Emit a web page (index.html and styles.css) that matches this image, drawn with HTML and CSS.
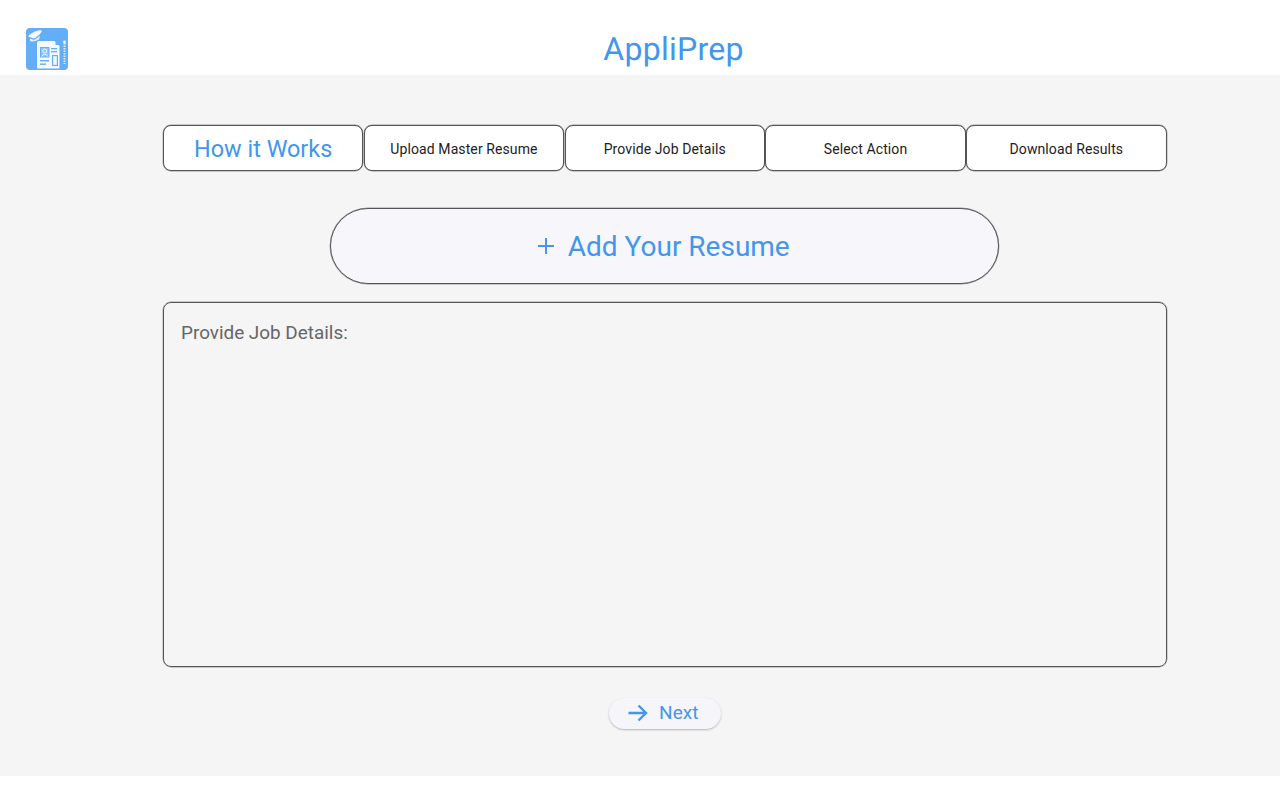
FILE: index.html
```html
<!DOCTYPE html>
<html lang="en">
<head>
    <meta charset="UTF-8" />
    <title>AppliPrep</title>
    <link rel="stylesheet" href="styles.css">
</head>
<body>
    <header class="top-bar">
        <svg class="logo" viewBox="0 0 42 42" aria-label="AppliPrep logo">
            <rect width="42" height="42" rx="4" fill="#64adf8" />
            <path d="M2 8.5 Q5 4 14 2 L16 3 Q14 7 8 10.5 Z" fill="#f4f9ff" />
            <path d="M4 10.5 L8 12 L14 8 L13 11.5 Q8 14.5 4 13 Z" fill="#e4f0fd" />
            <path d="M11 15 Q11 13 13 13 H28.5 L33.5 18 V40.5 H11 Z" fill="#f4f9ff" />
            <path d="M29.5 13 L33.5 17 H29.5 Z" fill="#64adf8" />
            <rect x="14" y="19" width="9.5" height="10.5" fill="#64adf8" />
            <rect x="15" y="20" width="7.5" height="8.5" fill="#8fc4fa" />
            <circle cx="18.7" cy="23" r="2" fill="none" stroke="#f4f9ff" />
            <path d="M15.5 28.5 Q18.7 24 22 28.5" fill="none" stroke="#f4f9ff" />
            <rect x="25" y="20" width="6" height="1.3" fill="#64adf8" />
            <rect x="25" y="23" width="6" height="1.3" fill="#64adf8" />
            <rect x="14" y="32" width="9" height="1.4" fill="#64adf8" />
            <rect x="14" y="35.5" width="6" height="1.4" fill="#64adf8" />
            <rect x="26" y="27" width="6" height="11" fill="#64adf8" />
            <rect x="27.2" y="28.2" width="3.6" height="8.6" fill="#f4f9ff" />
            <path d="M38.5 15 V36" stroke="#dcecfd" stroke-width="2" stroke-dasharray="1.5 1" />
            <circle cx="38.5" cy="14" r="1.4" fill="#f4f9ff" />
        </svg>
        <h1 class="app-title">AppliPrep</h1>
    </header>

    <main class="content">
        <nav class="steps">
            <button class="step step-active">How it Works</button>
            <button class="step">Upload Master Resume</button>
            <button class="step">Provide Job Details</button>
            <button class="step">Select Action</button>
            <button class="step">Download Results</button>
        </nav>

        <button class="add-resume">
            <svg class="plus-icon" viewBox="0 0 18 18">
                <path d="M9 1 V17 M1 9 H17" stroke="#4296ee" stroke-width="2" fill="none" />
            </svg>
            <span>Add Your Resume</span>
        </button>

        <textarea class="job-details" placeholder="Provide Job Details:"></textarea>

        <button class="next-btn">
            <svg class="arrow-icon" viewBox="0 0 20 18">
                <path d="M0.5 9 H18 M10.5 1.5 L18 9 L10.5 16.5" stroke="#4296ee" stroke-width="2.4" fill="none" />
            </svg>
            <span>Next</span>
        </button>
    </main>
</body>
</html>
```

FILE: styles.css
```css
* {
    box-sizing: border-box;
}
html, body {
    margin: 0;
    height: 100%;
    background: #fff;
    font-family: Roboto, "Liberation Sans", sans-serif;
    text-rendering: geometricPrecision;
}

/* Header */
.top-bar {
    display: flex;
    align-items: center;
    height: 75px;
    padding: 23px 1px 0 26px;
    background: #fff;
}
.logo {
    width: 42px;
    height: 42px;
    flex: none;
}
.app-title {
    flex: 1;
    margin: 0;
    text-align: center;
    font-size: 32px;
    font-weight: 400;
    color: #4296ee;
    letter-spacing: 0.25px;
}

/* Main area */
.content {
    display: flex;
    flex-direction: column;
    align-items: center;
    height: 701px;
    padding: 50px 113.5px 0 163px;
    background: #f5f5f5;
}

/* Step tabs */
.steps {
    display: grid;
    grid-template-columns: repeat(5, 1fr);
    gap: 0.5px;
    width: 100%;
    height: 46px;
}
.step {
    padding: 1px 0 0;
    background: #fff;
    border: 1px solid #555;
    border-radius: 8px;
    box-shadow: 0 0 0 0.4px rgba(68, 68, 68, 0.5);
    font-family: inherit;
    font-size: 14px;
    letter-spacing: 0.1px;
    color: #1c1b1f;
}
.step-active {
    font-size: 23.4px;
    letter-spacing: 0;
    color: #4296ee;
}

/* Add resume */
.add-resume {
    display: flex;
    align-items: center;
    justify-content: center;
    gap: 13px;
    width: 669px;
    height: 76px;
    margin-top: 37px;
    padding: 0 3px 0 0;
    background: #f6f6fb;
    border: 1px solid #555;
    border-radius: 38px;
    box-shadow: 0 0 0 0.4px rgba(68, 68, 68, 0.5);
    font-family: inherit;
    font-size: 28px;
    color: #4296ee;
}
.plus-icon {
    width: 18px;
    height: 18px;
}

/* Job details */
.job-details {
    display: block;
    width: 100%;
    height: 365px;
    margin-top: 18px;
    padding: 18px 17px;
    background: transparent;
    border: 1px solid #555;
    border-radius: 8px;
    box-shadow: 0 0 0 0.4px rgba(68, 68, 68, 0.5);
    outline: none;
    resize: none;
    font-family: inherit;
    font-size: 18.9px;
    line-height: 24px;
}
.job-details::placeholder {
    color: #666;
    opacity: 1;
}

/* Next */
.next-btn {
    display: flex;
    align-items: center;
    justify-content: center;
    gap: 11px;
    width: 112px;
    height: 31px;
    margin-top: 31px;
    padding: 0 3px 2px 0;
    background: #f5f5fa;
    border: none;
    border-radius: 16px;
    box-shadow: 0 1px 2px rgba(0, 0, 0, 0.25);
    font-family: inherit;
    font-size: 19px;
    color: #4296ee;
}
.arrow-icon {
    width: 20px;
    height: 18px;
}
```
